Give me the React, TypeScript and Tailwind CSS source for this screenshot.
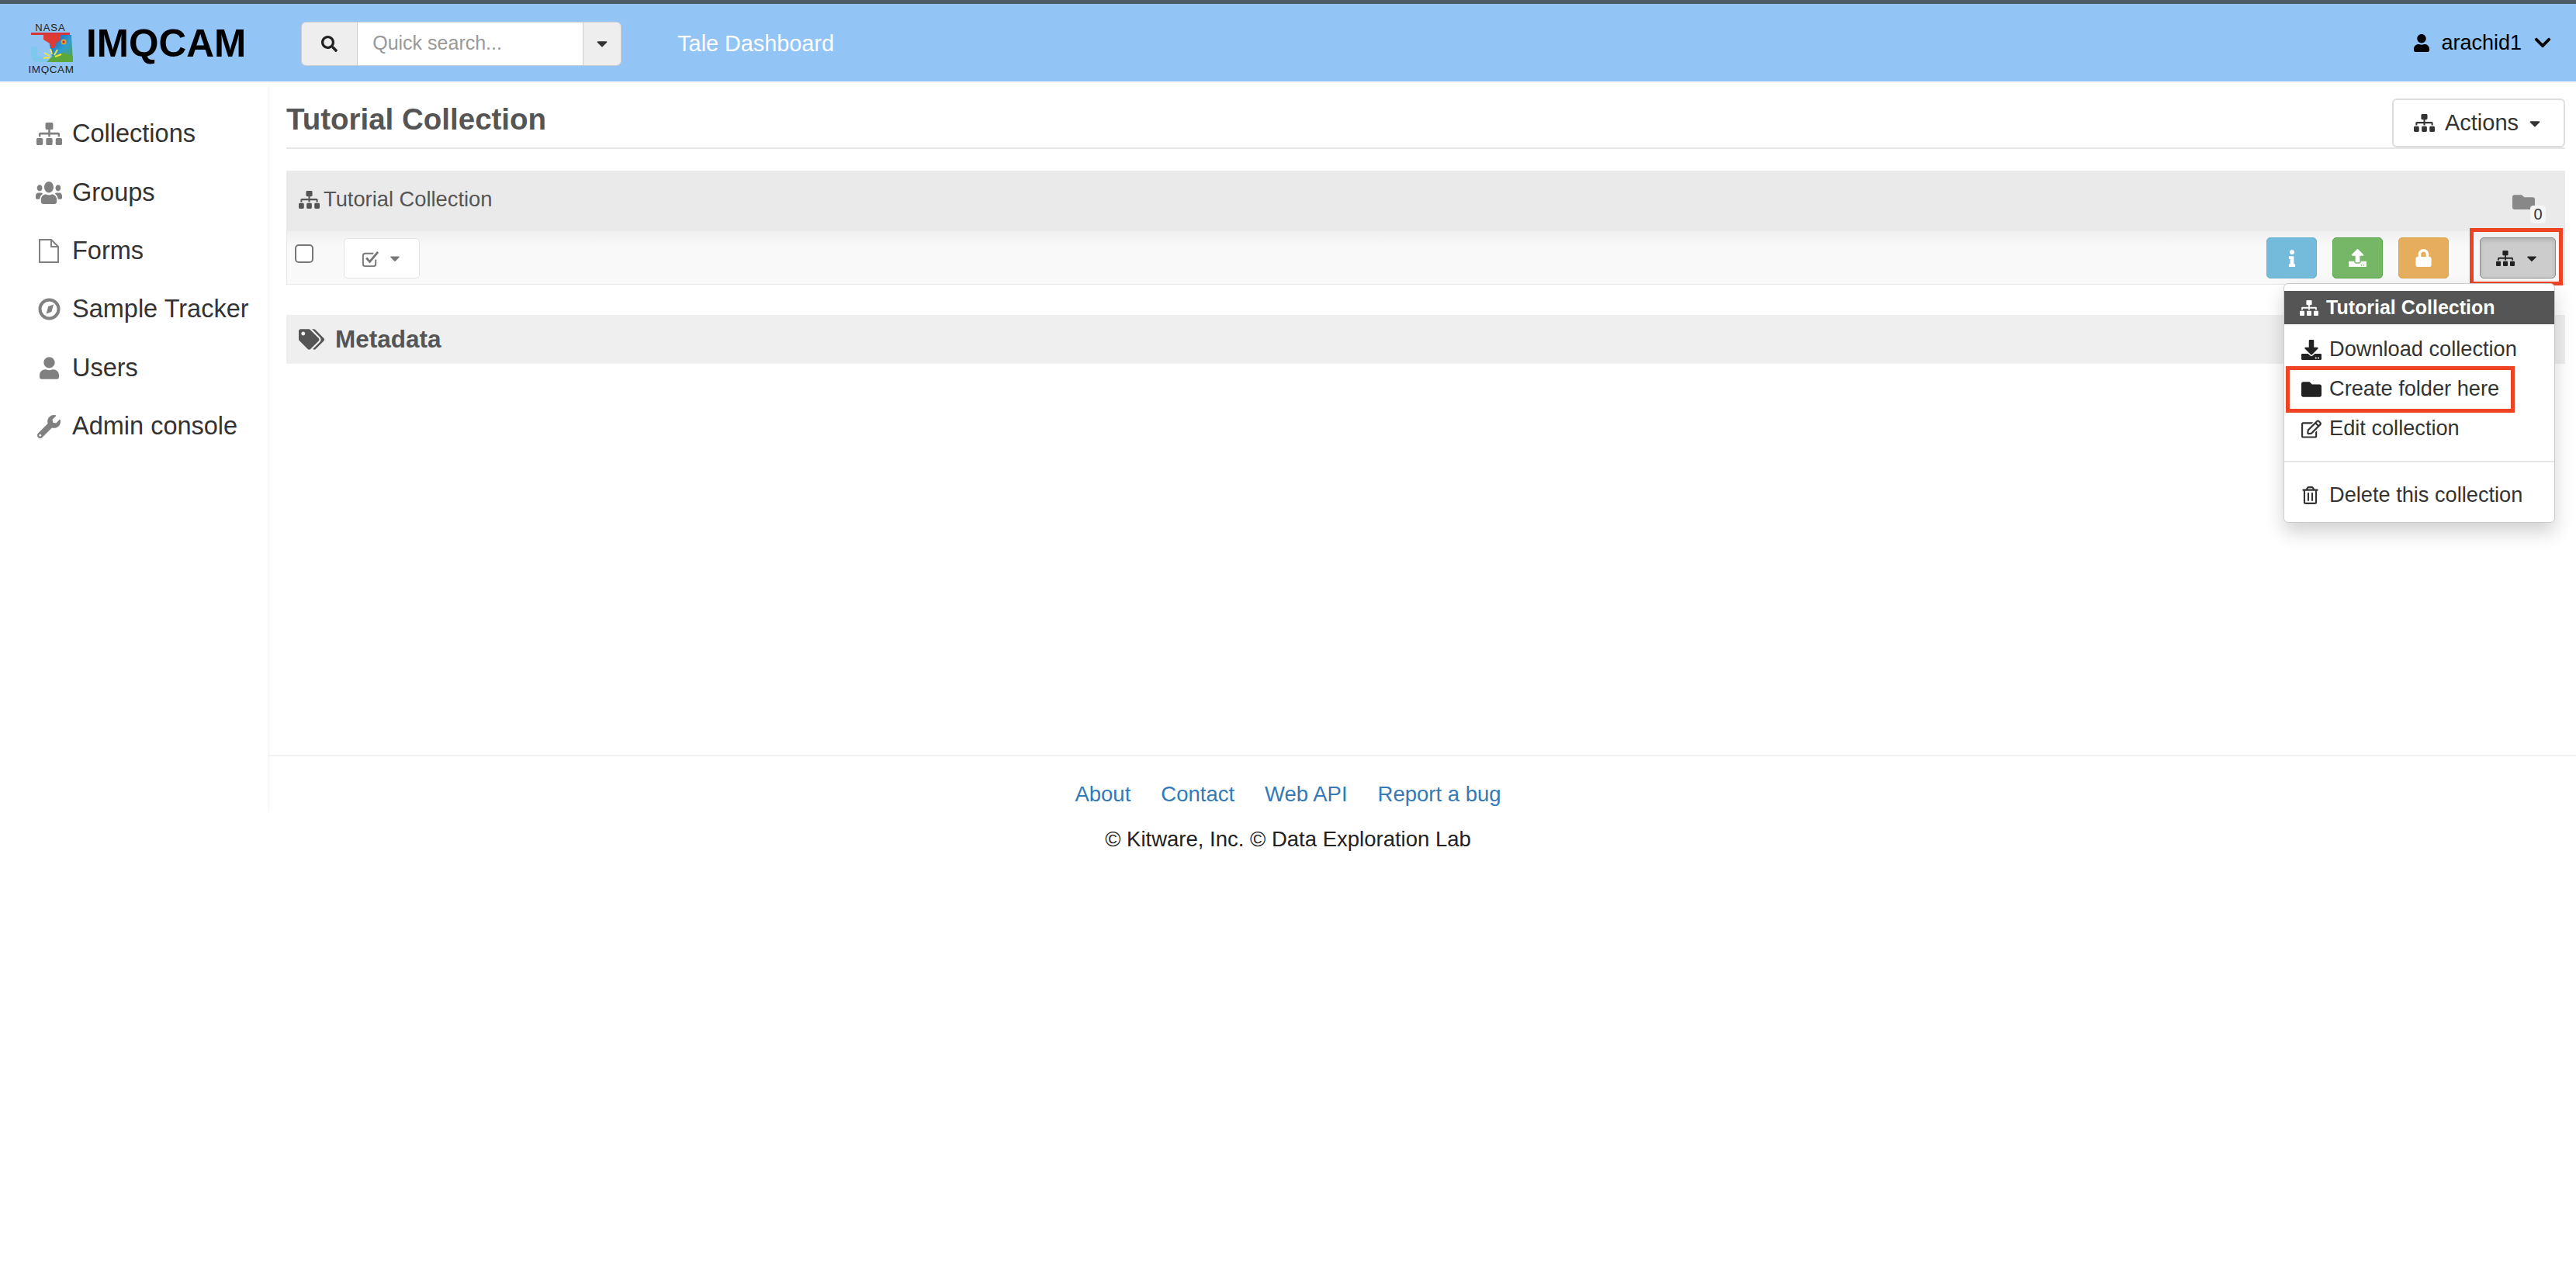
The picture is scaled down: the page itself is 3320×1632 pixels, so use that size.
import type { ReactNode } from "react";
import {
  FaCaretDown,
  FaChevronDown,
  FaDownload,
  FaFolder,
  FaInfo,
  FaLock,
  FaRegEdit,
  FaRegTrashAlt,
  FaSearch,
  FaSitemap,
  FaTags,
  FaUpload,
  FaUser,
  FaUsers,
  FaWrench,
} from "react-icons/fa";

function Logo() {
  return (
    <svg viewBox="0 0 68 68" className="mt-[13px] h-[68px] w-[68px] shrink-0">
      <defs>
        <linearGradient id="heat" x1="0" y1="0" x2="1" y2="1">
          <stop offset="0" stopColor="#1d4fb0" />
          <stop offset="0.55" stopColor="#2f9fd0" />
          <stop offset="1" stopColor="#56a53a" />
        </linearGradient>
      </defs>
      <text x="33" y="12" textAnchor="middle" fontFamily="Liberation Sans, sans-serif" fontSize="13" fill="#222" letterSpacing="1">
        NASA
      </text>
      <path d="M8 14h50v3H8z" fill="#d8343a" />
      <path d="M30 17h30l2 35H38l-4-10z" fill="url(#heat)" />
      <path d="M24 17h22v6l-6 5-2 6h-4l-2-6-8-5z" fill="#dd3b33" />
      <circle cx="50" cy="26" r="3.5" fill="#d9a53a" />
      <circle cx="50" cy="26" r="1.6" fill="#c23" />
      <path d="M8 32h8v8c0 4 3 5 7 5h6v7H18C11 52 8 48 8 42z" fill="#7ec8ee" />
      <path d="M28 52h34v-8l-12-4-14 4z" fill="#5aa83c" />
      <path d="M33 35l2 7M25 40l7 4M42 36l-4 7M47 42l-8 3M24 47l8-1" stroke="#f2e63c" strokeWidth="2" fill="none" />
      <text x="34" y="66" textAnchor="middle" fontFamily="Liberation Sans, sans-serif" fontSize="13.5" fill="#222" letterSpacing="0.6">
        IMQCAM
      </text>
    </svg>
  );
}

function Sitemap({ className }: { className: string }) {
  return <FaSitemap preserveAspectRatio="none" className={className} />;
}

function FileOutline() {
  return (
    <svg viewBox="0 0 28 33" className="h-[33px] w-[28px]" fill="none" stroke="currentColor" strokeWidth="2">
      <path d="M2 2h15l9 9v20H2z" />
      <path d="M17 2v9h9" />
    </svg>
  );
}

function Compass() {
  return (
    <svg viewBox="0 0 29 29" className="h-[29px] w-[29px]">
      <circle cx="14.5" cy="14.5" r="12" fill="none" stroke="currentColor" strokeWidth="4" />
      <path d="M20 8.5l-2.6 9.4-6.8 2.6 2.6-9.4z" fill="currentColor" />
    </svg>
  );
}

function CheckSquare() {
  return (
    <svg viewBox="0 0 26 26" className="h-[25px] w-[25px]" fill="none" stroke="currentColor" strokeWidth="2">
      <path d="M20 14v6a3 3 0 0 1-3 3H6a3 3 0 0 1-3-3V9a3 3 0 0 1 3-3h11" />
      <path d="M7.5 12l4.5 5L23 4" strokeWidth="3" />
    </svg>
  );
}

const sideItems: { label: string; icon: ReactNode }[] = [
  { label: "Collections", icon: <Sitemap className="h-[29px] w-[33px]" /> },
  { label: "Groups", icon: <FaUsers preserveAspectRatio="none" className="h-[33px] w-[35px]" /> },
  { label: "Forms", icon: <FileOutline /> },
  { label: "Sample Tracker", icon: <Compass /> },
  { label: "Users", icon: <FaUser className="h-[29px] w-[25px]" /> },
  { label: "Admin console", icon: <FaWrench className="h-[30px] w-[30px]" /> },
];

function Sidebar() {
  return (
    <aside className="h-[945px] w-[345px] shrink-0 pt-[30px] shadow-[5px_0_5px_-3px_rgba(0,0,0,0.04)]">
      {sideItems.map((item) => (
        <div key={item.label} className="flex h-[75.4px] items-center text-[32.5px] text-[#333]">
          <span className="flex w-[93px] shrink-0 justify-center pl-[46px] pr-[13px] text-[#808080]">{item.icon}</span>
          <span>{item.label}</span>
        </div>
      ))}
    </aside>
  );
}

function Header() {
  return (
    <header className="flex h-[100px] items-center bg-[#92c4f6] pl-[32px] pr-[31px]">
      <div className="flex items-center">
        <Logo />
        <span className="ml-[11px] mt-[2px] text-[49.5px] font-bold leading-none text-black">IMQCAM</span>
      </div>
      <div className="ml-[71px] mt-[2px] flex h-[57px] w-[413px] overflow-hidden rounded-[6px] border border-[#ccc] text-[25px]">
        <span className="flex w-[72px] items-center justify-center border-r border-[#ccc] bg-[#eee] text-[#222]">
          <FaSearch className="h-[21px] w-[21px]" />
        </span>
        <span className="flex flex-1 items-center bg-white pl-[19px] text-[#999]">Quick search...</span>
        <span className="flex w-[49px] items-center justify-center border-l border-[#ccc] bg-[#eee] text-[#333]">
          <FaCaretDown className="h-[22px] w-[22px]" />
        </span>
      </div>
      <span className="ml-[72px] mt-[3px] text-[28.8px] text-white">Tale Dashboard</span>
      <div className="ml-auto flex items-center text-[27px] text-black">
        <FaUser className="h-[23px] w-[20px]" />
        <span className="ml-[15px]">arachid1</span>
        <FaChevronDown className="ml-[15px] h-[24px] w-[24px]" />
      </div>
    </header>
  );
}

function CollectionMenu() {
  const row = "relative flex h-[51px] items-center text-[#333]";
  return (
    <div className="absolute right-[1px] top-[59px] z-10 w-[350px] rounded-[6px] border border-[#ccc] bg-white pb-[9px] pt-[9px] text-[27.2px] shadow-[0_12px_24px_rgba(0,0,0,0.18)]">
      <div className="mb-[7px] flex h-[43px] items-center bg-[#555] pl-[20px] text-[25px] font-bold text-white">
        <Sitemap className="h-[20px] w-[24px]" />
        <span className="ml-[10px]">Tutorial Collection</span>
      </div>
      <div className={row}>
        <span className="flex w-[58px] justify-end pr-[10px] text-[#222]">
          <FaDownload className="h-[26px] w-[26px]" />
        </span>
        Download collection
      </div>
      <div className={row}>
        <span className="flex w-[58px] justify-end pr-[10px] text-[#222]">
          <FaFolder className="h-[26px] w-[26px]" />
        </span>
        Create folder here
        <span className="pointer-events-none absolute -bottom-[5px] -top-[4px] left-[2px] w-[295px] border-[5px] border-[#ee4423]" />
      </div>
      <div className={row}>
        <span className="flex w-[58px] justify-end pr-[10px] text-[#333]">
          <FaRegEdit className="h-[26px] w-[26px]" />
        </span>
        Edit collection
      </div>
      <div className="mb-[17px] mt-[16px] h-[2px] bg-[#e5e5e5]" />
      <div className={row}>
        <span className="flex w-[58px] justify-end pr-[13px] text-[#333]">
          <FaRegTrashAlt className="h-[23px] w-[23px]" />
        </span>
        Delete this collection
      </div>
    </div>
  );
}

function Toolbar() {
  const square = "flex h-[53px] w-[65px] items-center justify-center rounded-[5px] border text-white";
  return (
    <div className="flex h-[69px] items-start border border-t-0 border-[#e7e7e7] bg-[#f8f8f8] bg-gradient-to-b from-[#f0f0f0] to-[#f9f9f9] to-[30%] pl-[10px] pr-[11px]">
      <input type="checkbox" className="mt-[17px] h-[24px] w-[24px] appearance-none rounded-[5px] border-2 border-[#777] bg-white" />
      <button className="ml-[39px] mt-[9px] flex h-[52px] w-[98px] items-center justify-center rounded-[5px] border border-[#e3e3e3] bg-white text-[#777]">
        <CheckSquare />
        <FaCaretDown className="ml-[9px] h-[20px] w-[20px]" />
      </button>
      <div className="ml-auto mt-[8px] flex">
        <button className={`${square} border-[#6db3d2] bg-[#74bbdb]`}>
          <FaInfo className="h-[22px] w-[22px]" />
        </button>
        <button className={`${square} ml-[20px] border-[#5aa84c] bg-[#76b767]`}>
          <FaUpload className="h-[23px] w-[23px]" />
        </button>
        <button className={`${square} ml-[20px] border-[#dfa650] bg-[#e5ad5c]`}>
          <FaLock className="h-[23px] w-[23px]" />
        </button>
        <div className="relative ml-[40px]">
          <button className="flex h-[53px] w-[98px] items-center justify-center rounded-[5px] border border-[#8c8c8c] bg-[#ccc] text-[#222] shadow-[inset_0_3px_5px_rgba(0,0,0,0.125)]">
            <Sitemap className="h-[20px] w-[24px]" />
            <FaCaretDown className="ml-[12px] h-[20px] w-[20px]" />
          </button>
          <span className="pointer-events-none absolute -bottom-[9px] -left-[13px] -right-[9px] -top-[12px] border-[5px] border-[#ee4423]" />
          <CollectionMenu />
        </div>
      </div>
    </div>
  );
}

function Content() {
  return (
    <div className="h-[868px] pl-[24px] pr-[14px] pt-[22px]">
      <div className="flex h-[65px] items-start justify-between border-b-2 border-[#e6e6e6]">
        <h1 className="mt-[5px] text-[38.5px] font-bold leading-[44px] text-[#555]">Tutorial Collection</h1>
        <button className="flex h-[63px] w-[223px] items-center justify-center rounded-[6px] border-2 border-[#ddd] bg-white text-[29px] text-[#333]">
          <Sitemap className="h-[23px] w-[27px]" />
          <span className="ml-[13px]">Actions</span>
          <FaCaretDown className="ml-[10px] h-[22px] w-[22px]" />
        </button>
      </div>
      <div className="mt-[28px]">
        <div className="flex h-[78px] items-center bg-[#eaeaea] pb-[3px] pl-[16px] pr-[39px] text-[27.3px] text-[#555]">
          <Sitemap className="h-[23px] w-[27px]" />
          <span className="ml-[5px]">Tutorial Collection</span>
          <span className="relative ml-auto mt-[5px] text-[#888]">
            <FaFolder preserveAspectRatio="none" className="h-[25px] w-[29px]" />
            <span className="absolute -bottom-[15px] -right-[14px] flex h-[23px] w-[20px] items-center justify-center rounded-[4px] bg-[#f5f5f5] text-[20px] text-[#333]">
              0
            </span>
          </span>
        </div>
        <Toolbar />
      </div>
      <div className="mt-[39px] flex h-[63px] items-center bg-[#efefef] pl-[16px] text-[31.5px] font-bold text-[#555]">
        <FaTags className="h-[31px] w-[33px]" />
        <span className="ml-[14px]">Metadata</span>
      </div>
    </div>
  );
}

function Footer() {
  const links = ["About", "Contact", "Web API", "Report a bug"];
  return (
    <footer className="border-t-2 border-[#f2f2f2] pr-[345px] text-center text-[27.5px]">
      <div className="mt-[31px] flex justify-center gap-[39px] leading-[36px] text-[#337ab7]">
        {links.map((link) => (
          <a key={link}>{link}</a>
        ))}
      </div>
      <p className="mt-[22px] leading-[36px] text-[#222]">© Kitware, Inc. © Data Exploration Lab</p>
    </footer>
  );
}

export default function App() {
  return (
    <div className="min-h-[1632px] bg-white font-['Liberation_Sans',Arial,sans-serif]">
      <div className="h-[5px] bg-[#4d5b66]" />
      <Header />
      <div className="flex">
        <Sidebar />
        <main className="min-w-0 flex-1">
          <Content />
          <Footer />
        </main>
      </div>
    </div>
  );
}
